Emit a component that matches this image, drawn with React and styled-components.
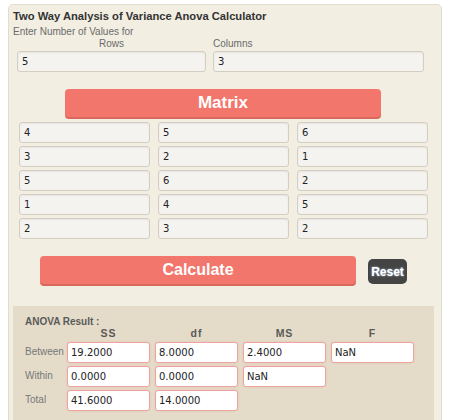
import styled, { createGlobalStyle } from "styled-components"

const GlobalStyle = createGlobalStyle`
body{
    margin: 0;
    background: #ffffff;
    font-family: "Liberation Sans", Arial, sans-serif;
}
`

const matrix = [
    ["4", "5", "6"],
    ["3", "2", "1"],
    ["5", "6", "2"],
    ["1", "4", "5"],
    ["2", "3", "2"],
]

const results = [
    { label: "Between", values: ["19.2000", "8.0000", "2.4000", "NaN"] },
    { label: "Within", values: ["0.0000", "0.0000", "NaN"] },
    { label: "Total", values: ["41.6000", "14.0000"] },
]

export default function App(){
    return (
        <>
            <GlobalStyle />
            <Painel>
                <Titulo>Two Way Analysis of Variance Anova Calculator</Titulo>
                <Subtitulo>Enter Number of Values for</Subtitulo>
                <LinhaTamanho>
                    <Campo w={189}>
                        <Rotulo center>Rows</Rotulo>
                        <CaixaCinza defaultValue="5" />
                    </Campo>
                    <Campo w={211}>
                        <Rotulo>Columns</Rotulo>
                        <CaixaCinza defaultValue="3" />
                    </Campo>
                </LinhaTamanho>
                <BotaoMatrix>Matrix</BotaoMatrix>
                <GradeMatriz>
                    {matrix.flat().map((v, i) => <CaixaCinza key={i} defaultValue={v} />)}
                </GradeMatriz>
                <LinhaBotoes>
                    <BotaoCalcular>Calculate</BotaoCalcular>
                    <BotaoReset>Reset</BotaoReset>
                </LinhaBotoes>
                <Resultado>
                    <TituloResultado>ANOVA Result :</TituloResultado>
                    <GradeResultado>
                        <span></span>
                        <Cabecalho>SS</Cabecalho>
                        <Cabecalho>df</Cabecalho>
                        <Cabecalho>MS</Cabecalho>
                        <Cabecalho>F</Cabecalho>
                        {results.map((r) => [
                            <RotuloLinha key={r.label}>{r.label}</RotuloLinha>,
                            ...[0, 1, 2, 3].map((j) =>
                                r.values[j] !== undefined
                                    ? <CaixaResultado key={r.label + j} defaultValue={r.values[j]} />
                                    : <span key={r.label + j}></span>
                            ),
                        ])}
                    </GradeResultado>
                </Resultado>
            </Painel>
        </>
    )
}

const Painel = styled.div`
margin: 4px 0 0 8px;
width: 434px;
height: 430px;
box-sizing: border-box;
background-color: #f2eee2;
border: 1px solid #e2dccc;
border-radius: 5px;
padding: 4px 0 0 4px;
`

const Titulo = styled.div`
font-size: 11.2px;
font-weight: bold;
color: #333333;
line-height: 14px;
`

const Subtitulo = styled.div`
font-size: 10px;
color: #6b6b6b;
line-height: 13px;
margin-top: 2px;
`

const LinhaTamanho = styled.div`
display: flex;
gap: 7px;
padding-left: 4px;
`

const Campo = styled.div`
display: flex;
flex-direction: column;
width: ${(p) => p.w}px;
`

const Rotulo = styled.div`
font-size: 10px;
color: #6b6b6b;
line-height: 11px;
text-align: ${(p) => (p.center ? "center" : "left")};
margin-bottom: 2px;
`

const CaixaCinza = styled.input`
box-sizing: border-box;
width: 100%;
height: 21px;
background-color: #f5f3f0;
border: 1px solid #d4cec2;
border-radius: 3px;
box-shadow: inset 0 1px 2px rgba(0,0,0,0.06);
font-family: "DejaVu Sans", Tahoma, sans-serif;
font-size: 10px;
color: #222222;
padding: 0 4px;
outline: none;
`

const BotaoMatrix = styled.button`
display: block;
margin: 17px 0 0 52px;
width: 316px;
height: 28px;
border: none;
border-radius: 4px;
background-color: #f2766b;
box-shadow: 0 2px 0 #d9675c;
color: #ffffff;
font-family: "Liberation Sans", Arial, sans-serif;
font-size: 17px;
font-weight: bold;
padding: 0;
`

const GradeMatriz = styled.div`
display: grid;
grid-template-columns: repeat(3, 131px);
column-gap: 8px;
row-gap: 3px;
margin: 5px 0 0 6px;
`

const LinhaBotoes = styled.div`
display: flex;
align-items: flex-end;
margin: 17px 0 0 27px;
gap: 12px;
`

const BotaoCalcular = styled.button`
width: 316px;
height: 28px;
border: none;
border-radius: 4px;
background-color: #f2766b;
box-shadow: 0 2px 0 #d9675c;
color: #ffffff;
font-family: "Liberation Sans", Arial, sans-serif;
font-size: 16px;
font-weight: bold;
padding: 0;
`

const BotaoReset = styled.button`
width: 39px;
height: 25px;
border: none;
border-radius: 5px;
background-color: #444444;
color: #ffffff;
font-family: "Liberation Sans", Arial, sans-serif;
font-size: 12px;
font-weight: bold;
padding: 0;
text-shadow: 0 0 2px #bcd6ff;
`

const Resultado = styled.div`
margin: 22px 0 0 0;
width: 421px;
height: 120px;
background-color: #e4dcc9;
padding: 10px 0 0 12px;
box-sizing: border-box;
`

const TituloResultado = styled.div`
font-size: 10px;
font-weight: bold;
color: #5a5a5a;
line-height: 11px;
`

const GradeResultado = styled.div`
display: grid;
grid-template-columns: 37px repeat(4, 83px);
column-gap: 5px;
row-gap: 3px;
font-size: 10px;
line-height: 12px;
`

const Cabecalho = styled.div`
font-size: 10.5px;
font-weight: bold;
color: #5a5a5a;
text-align: center;
letter-spacing: 1px;
line-height: 12px;
margin-bottom: 0;
`

const RotuloLinha = styled.div`
font-size: 10px;
color: #777777;
white-space: nowrap;
line-height: 19px;
`

const CaixaResultado = styled.input`
box-sizing: border-box;
width: 83px;
height: 21px;
background-color: #ffffff;
border: 1px solid #efa3a0;
border-radius: 3px;
box-shadow: 0 0 2px rgba(240,120,110,0.3);
font-family: "DejaVu Sans", Tahoma, sans-serif;
font-size: 10px;
color: #222222;
padding: 0 3px;
outline: none;
`
